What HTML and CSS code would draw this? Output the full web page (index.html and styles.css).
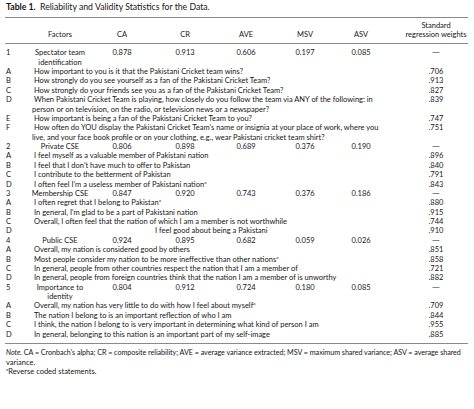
FILE: index.html
```html
<!DOCTYPE html>
<html>
<head>
<meta charset="utf-8">
<link rel="stylesheet" href="styles.css">
</head>
<body>
<div class="title"><b>Table 1.</b>&nbsp;&nbsp;Reliability and Validity Statistics for the Data.</div>
<div class="tbl">
  <div class="row head">
    <div></div>
    <div class="c">Factors</div>
    <div class="c">CA</div>
    <div class="c">CR</div>
    <div class="c">AVE</div>
    <div class="c">MSV</div>
    <div class="c">ASV</div>
    <div></div>
    <div class="c">Standard<br>regression weights</div>
  </div>
  <div class="body">
    <div class="row"><div class="n">1</div><div class="f">Spectator team<br>identification</div><div class="c">0.878</div><div class="c">0.913</div><div class="c">0.606</div><div class="c">0.197</div><div class="c">0.085</div><div></div><div class="c"><span class="dash">—</span></div></div>
    <div class="row"><div class="n">A</div><div class="item">How important to you is it that the Pakistani Cricket team wins?</div><div class="w">.706</div></div>
    <div class="row"><div class="n">B</div><div class="item">How strongly do you see yourself as a fan of the Pakistani Cricket Team?</div><div class="w">.913</div></div>
    <div class="row"><div class="n">C</div><div class="item">How strongly do your friends see you as a fan of the Pakistani Cricket Team?</div><div class="w">.827</div></div>
    <div class="row"><div class="n">D</div><div class="item">When Pakistani Cricket Team is playing, how closely do you follow the team via ANY of the following: in<br>person or on television, on the radio, or television news or a newspaper?</div><div class="w">.839</div></div>
    <div class="row"><div class="n">E</div><div class="item">How important is being a fan of the Pakistani Cricket Team to you?</div><div class="w">.747</div></div>
    <div class="row"><div class="n">F</div><div class="item">How often do YOU display the Pakistani Cricket Team's name or insignia at your place of work, where you<br>live, and your face book profile or on your clothing, e.g., wear Pakistani cricket team shirt?</div><div class="w">.751</div></div>
    <div class="row"><div class="n">2</div><div class="f">Private CSE</div><div class="c">0.806</div><div class="c">0.898</div><div class="c">0.689</div><div class="c">0.376</div><div class="c">0.190</div><div></div><div class="c"><span class="dash">—</span></div></div>
    <div class="row"><div class="n">A</div><div class="item">I feel myself as a valuable member of Pakistani nation</div><div class="w">.896</div></div>
    <div class="row"><div class="n">B</div><div class="item">I feel that I don't have much to offer to Pakistan</div><div class="w">.840</div></div>
    <div class="row"><div class="n">C</div><div class="item">I contribute to the betterment of Pakistan</div><div class="w">.791</div></div>
    <div class="row"><div class="n">D</div><div class="item">I often feel I'm a useless member of Pakistani nation<sup>a</sup></div><div class="w">.843</div></div>
    <div class="row"><div class="n">3</div><div class="f">Membership CSE</div><div class="c">0.847</div><div class="c">0.920</div><div class="c">0.743</div><div class="c">0.376</div><div class="c">0.186</div><div></div><div class="c"><span class="dash">—</span></div></div>
    <div class="row"><div class="n">A</div><div class="item">I often regret that I belong to Pakistan<sup>a</sup></div><div class="w">.880</div></div>
    <div class="row"><div class="n">B</div><div class="item">In general, I'm glad to be a part of Pakistani nation</div><div class="w">.915</div></div>
    <div class="row"><div class="n">C</div><div class="item">Overall, I often feel that the nation of which I am a member is not worthwhile</div><div class="w">.744</div></div>
    <div class="row"><div class="n">D</div><div class="item shifted">I feel good about being a Pakistani</div><div class="w">.910</div></div>
    <div class="row"><div class="n">4</div><div class="f">Public CSE</div><div class="c">0.924</div><div class="c">0.895</div><div class="c">0.682</div><div class="c">0.059</div><div class="c">0.026</div><div></div><div class="c"><span class="dash">—</span></div></div>
    <div class="row"><div class="n">A</div><div class="item">Overall, my nation is considered good by others</div><div class="w">.851</div></div>
    <div class="row"><div class="n">B</div><div class="item">Most people consider my nation to be more ineffective than other nations<sup>a</sup></div><div class="w">.858</div></div>
    <div class="row"><div class="n">C</div><div class="item">In general, people from other countries respect the nation that I am a member of</div><div class="w">.721</div></div>
    <div class="row"><div class="n">D</div><div class="item">In general, people from foreign countries think that the nation I am a member of is unworthy</div><div class="w">.882</div></div>
    <div class="row"><div class="n">5</div><div class="f">Importance to<br>identity</div><div class="c">0.804</div><div class="c">0.912</div><div class="c">0.724</div><div class="c">0.180</div><div class="c">0.085</div><div></div><div class="c"><span class="dash">—</span></div></div>
    <div class="row"><div class="n">A</div><div class="item">Overall, my nation has very little to do with how I feel about myself<sup>a</sup></div><div class="w">.709</div></div>
    <div class="row"><div class="n">B</div><div class="item">The nation I belong to is an important reflection of who I am</div><div class="w">.844</div></div>
    <div class="row"><div class="n">C</div><div class="item">I think, the nation I belong to is very important in determining what kind of person I am</div><div class="w">.955</div></div>
    <div class="row"><div class="n">D</div><div class="item">In general, belonging to this nation is an important part of my self-image</div><div class="w">.885</div></div>
  </div>
</div>
<div class="note">
  <p class="one"><i>Note.</i> CA = Cronbach's alpha; CR = composite reliability; AVE = average variance extracted; MSV = maximum shared variance; ASV = average shared</p>
  <p>variance.</p>
  <p><sup>a</sup>Reverse coded statements.</p>
</div>
</body>
</html>
```
FILE: styles.css
```css
html, body {
  margin: 0;
  padding: 0;
  background: #ffffff;
}
body {
  padding: 2px 6px 0 5px;
  font-family: Lato, "Open Sans", "DejaVu Sans", sans-serif;
  font-size: 7.5px;
  color: #161616;
  line-height: 9.37px;
}
.title {
  font-size: 8.7px;
  line-height: 10px;
  height: 10px;
  padding-left: 1px;
  margin-bottom: 4.5px;
}
.title b {
  font-weight: 700;
  color: #111111;
}
.tbl {
  border-top: 1px solid #8a8a8a;
  border-bottom: 1px solid #8a8a8a;
}
.row {
  display: grid;
  grid-template-columns: 25px 60px 64px 62px 60px 58px 54px 16px 64px;
}
.head {
  align-items: end;
  padding: 3px 0 4px;
  border-bottom: 1px solid #8a8a8a;
}
.body {
  padding: 4px 0 4px;
}
.c {
  text-align: center;
  white-space: nowrap;
}
.dash {
  display: inline-block;
  transform: scaleX(1.4);
}
.n {
  padding-left: 1px;
}
.f {
  text-align: center;
  white-space: nowrap;
}
.item {
  grid-column: 2 / 9;
  padding-left: 2px;
  text-indent: 2px;
  white-space: nowrap;
}
.item.shifted {
  padding-left: 123px;
}
.w {
  grid-column: 9;
  text-align: center;
}
sup {
  font-size: 4.5px;
  line-height: 0;
  vertical-align: 3px;
}
.note {
  padding: 4.5px 0 0 1px;
}
.note p {
  margin: 0;
}
.note .one {
  white-space: nowrap;
  font-size: 7.2px;
  letter-spacing: -0.05px;
}
```
